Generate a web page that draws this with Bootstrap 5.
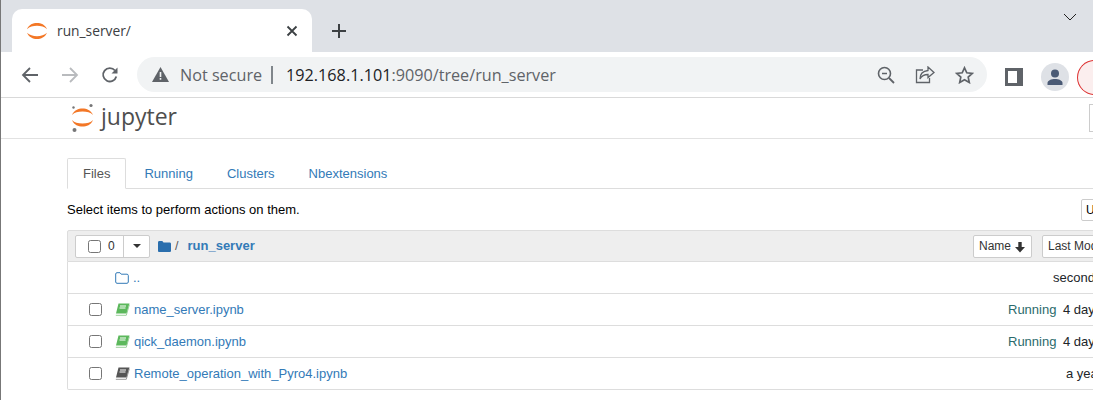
<!DOCTYPE html>
<html lang="en">
<head>
    <meta charset="UTF-8">
    <meta name="viewport" content="width=device-width, initial-scale=1.0">
    <title>run_server/</title>
    <link href="https://cdn.jsdelivr.net/npm/bootstrap@5.3.3/dist/css/bootstrap.min.css" rel="stylesheet">
    <script src="https://cdn.jsdelivr.net/npm/bootstrap@5.3.3/dist/js/bootstrap.bundle.min.js"></script>
    <style>
        html, body { height: 400px; overflow: hidden; }
        body {
            width: 1093px;
            background: #fff;
            font: 13px/18px "Liberation Sans", Arial, sans-serif;
            color: #000;
            border-left: 1px solid #777;
        }
        .tabstrip { height: 52px; background: #dee1e6; padding: 9px 0 0 11px; }
        .tab-active {
            width: 300px; height: 43px; background: #fff;
            border-radius: 10px 10px 0 0; padding: 0 14px 0 14px;
            font: 14px "Open Sans", sans-serif; color: #3c4043;
        }
        .tab-title { margin-left: 9px; font-size: 13.8px; }
        .tab-plus { margin-left: 19px; }
        .window-chevron { margin: 4px 16px 0 auto; align-self: flex-start; }
        .toolbar { height: 46px; border-bottom: 1px solid #d9d9d9; padding-top: 5px; }
        .nav-glyphs { width: 136px; flex: none; padding-left: 20px; gap: 22px; height: 35px; }
        .omnibox {
            width: 850px; flex: none; height: 35px; background: #f1f3f4; border-radius: 18px;
            padding: 0 13px 0 15px; font: 16.2px "Open Sans", sans-serif; color: #202124; white-space: nowrap;
        }
        .not-secure { color: #5f6368; margin-left: 11px; }
        .omni-sep { width: 2px; height: 18px; background: #80868b; margin: 0 13px 0 9px; }
        .url-dim { color: #5f6368; }
        .omni-icons { gap: 16px; margin-left: auto; }
        .tool-right { margin-left: 18px; gap: 18px; min-width: 0; }
        .avatar { width: 28px; height: 28px; border-radius: 50%; background: #dee1e6; flex: none; }
        .profile-chip {
            width: 40px; height: 35px; border: 1.5px solid #d33; border-right: 0;
            border-radius: 18px 0 0 18px; background: #fbeeee; margin-left: -10px; flex: none;
        }
        .jp-header { height: 41px; border-bottom: 1px solid #e2e2e2; padding-left: 70px; position: relative; }
        .jp-word { font: 23px "Open Sans", sans-serif; color: #4e4e4e; margin: 0 0 5px 6px; line-height: 30px; }
        .jp-corner { position: absolute; left: 1088px; top: 6px; width: 20px; height: 28px; border: 1px solid #ccc; }
        .jp-main { width: 1170px; margin-left: 66px; padding-top: 19px; }
        .jp-tabs.nav-tabs { border-color: #ddd; height: 31px; }
        .jp-tabs .nav-link {
            color: #337ab7; padding: 6px 15px; height: 31px; margin-right: 2px; line-height: 18px;
            font-size: 13px; border-radius: 2px 2px 0 0;
        }
        .jp-tabs .nav-link.active { color: #555; border-color: #ddd #ddd #fff; }
        .action-row { height: 41px; padding-top: 12px; position: relative; }
        .upload-edge {
            position: absolute; left: 1014px; top: 10px; width: 60px; height: 22px;
            border: 1px solid #ccc; border-radius: 2px; padding: 1px 0 0 4px; font-size: 12px; background: #fff;
        }
        .file-list { border-radius: 2px; border-color: #ddd; }
        .file-list .list-group-item { border-color: #ddd; padding: 0; height: 32px; display: flex; align-items: center; position: relative; font-size: 13px; }
        .file-list .list-head { background: #eee; height: 32px; }
        .sel-group { margin-left: 7px; height: 23px; border: 1px solid #ccc; border-radius: 2px; background: #fff; width: 75px; }
        .sel-main { width: 49px; padding-left: 12px; gap: 7px; font-size: 12px; color: #333; border-right: 1px solid #ccc; }
        .sel-caret { width: 25px; justify-content: center; }
        .caret-shape { width: 0; height: 0; border-left: 4px solid transparent; border-right: 4px solid transparent; border-top: 4px solid #333; }
        .jp-check {
            width: 13px; height: 13px; border: 1px solid #767676; border-radius: 2.5px; background: #fff; flex: none;
        }
        .crumb { margin-left: 8px; gap: 4px; color: #337ab7; }
        .crumb-name { font-weight: 700; margin-left: 5px; font-size: 13px; }
        .crumb-slash { color: #555; font-size: 12.5px; }
        .sort-btn {
            position: absolute; top: 4px; height: 23px; background: #fff; border: 1px solid #ccc; border-radius: 2px;
            font-size: 12px; color: #333; padding: 2px 5px; white-space: nowrap; line-height: 17px;
        }
        .sort-name { left: 905px; width: 59px; }
        .sort-date { left: 974px; width: 130px; }
        .row-check { margin-left: 21px; }
        .item-icon { margin-left: 13px; flex: none; width: 15px; }
        .up-icon { margin-left: 47px; }
        .item-link { color: #337ab7; text-decoration: none; margin-left: 4px; }
        .item-status { position: absolute; left: 940px; color: #2b6a6c; }
        .item-time { position: absolute; white-space: nowrap; }
    </style>
</head>
<body>
    <div class="tabstrip d-flex">
        <div class="tab-active d-flex align-items-center">
            <svg width="22" height="18" viewBox="0 0 22 18"><path d="M1 7.2C3 2.6 7 1 11 1s8 1.6 10 6.2C18.500 4.800 15 3.800 11 3.800S3.500 4.800 1 7.200z" fill="#f37726"/><path d="M1 10.800C3 15.400 7 17 11 17s8-1.600 10-6.200C18.500 13.200 15 14.200 11 14.200S3.500 13.200 1 10.800z" fill="#f37726"/></svg>
            <span class="tab-title">run_server/</span>
            <svg class="ms-auto" width="12" height="12" viewBox="0 0 12 12"><path d="M1.500 1.500l9 9M10.500 1.500l-9 9" stroke="#3c4043" stroke-width="1.800"/></svg>
        </div>
        <svg class="tab-plus align-self-center" width="16" height="16" viewBox="0 0 16 16"><path d="M8 1v14M1 8h14" stroke="#3c4043" stroke-width="2"/></svg>
        <svg class="window-chevron" width="14" height="8" viewBox="0 0 14 8"><path d="M1 1l6 6 6-6" fill="none" stroke="#222" stroke-width="1"/></svg>
    </div>
    <div class="toolbar d-flex">
        <div class="nav-glyphs d-flex align-items-center">
            <svg width="18" height="18" viewBox="0 0 18 18"><path d="M17 9H2M9 2L2 9l7 7" fill="none" stroke="#5f6368" stroke-width="1.800"/></svg>
            <svg width="18" height="18" viewBox="0 0 18 18"><path d="M1 9h15M9 2l7 7-7 7" fill="none" stroke="#b9bbbe" stroke-width="1.800"/></svg>
            <svg width="18" height="18" viewBox="0 0 18 18"><path d="M15.300 10.500A6.700 6.700 0 1 1 14 4.500" fill="none" stroke="#5f6368" stroke-width="1.800"/><path d="M16.500 1.500V7.500H10.500z" fill="#5f6368"/></svg>
        </div>
        <div class="omnibox d-flex align-items-center">
            <svg width="17" height="15" viewBox="0 0 17 15"><path d="M8.500 0L17 15H0z" fill="#5f6368"/><path d="M7.700 5h1.600v5H7.700zM7.700 11h1.600v1.700H7.700z" fill="#f1f3f4"/></svg>
            <span class="not-secure">Not secure</span>
            <span class="omni-sep"></span>
            <span>192.168.1.101<span class="url-dim">:9090/tree/run_server</span></span>
            <div class="omni-icons d-flex align-items-center">
                <svg width="18" height="18" viewBox="0 0 18 18"><circle cx="7.500" cy="7.500" r="6" fill="none" stroke="#5f6368" stroke-width="1.600"/><path d="M5 7.500h5" stroke="#5f6368" stroke-width="1.500"/><path d="M12 12l5 5" stroke="#5f6368" stroke-width="1.800"/></svg>
                <svg class="mx-1" width="20" height="18" viewBox="0 0 20 18"><path d="M8 4H1.500v12.500h13V12" fill="none" stroke="#5f6368" stroke-width="1.300"/><path d="M13 1l6 5.500-6 5V8.500C9 8.500 6.500 10 5 13c0-5 3-8 8-8.500z" fill="none" stroke="#5f6368" stroke-width="1.300"/></svg>
                <svg width="19" height="18" viewBox="0 0 19 18"><path d="M9.500 1.800l2.300 5 5.400.6-4 3.700 1.100 5.400-4.800-2.700-4.800 2.700 1.100-5.400-4-3.700 5.400-.6z" fill="none" stroke="#5f6368" stroke-width="1.700"/></svg>
            </div>
        </div>
        <div class="tool-right d-flex align-items-center flex-grow-1">
            <svg class="flex-shrink-0" width="18" height="18" viewBox="0 0 18 18"><rect width="18" height="18" fill="#5f6368"/><rect x="3" y="3" width="9" height="12" fill="#fff"/></svg>
            <div class="avatar d-flex align-items-center justify-content-center">
                <svg width="18" height="16" viewBox="0 0 18 16"><circle cx="9" cy="4.500" r="4" fill="#4a5a75"/><path d="M1.500 16v-2c0-2.500 4-4 7.500-4s7.500 1.500 7.500 4v2z" fill="#4a5a75"/></svg>
            </div>
            <div class="profile-chip"></div>
        </div>
    </div>
    <div class="jp-header d-flex align-items-center">
        <svg width="24" height="30" viewBox="0 0 24 30"><circle cx="20" cy="2.500" r="1.600" fill="#767677"/><circle cx="2.500" cy="4.500" r="1.200" fill="#767677"/><circle cx="3.500" cy="27" r="2" fill="#767677"/><path d="M1 12C3 7 7.500 5.500 11.500 5.500S20 7 22 12C19.500 9.400 16 8.500 11.500 8.500S3.500 9.400 1 12z" fill="#f37726"/><path d="M1 17C3 22 7.500 23.500 11.500 23.500S20 22 22 17C19.500 19.600 16 20.500 11.500 20.500S3.500 19.600 1 17z" fill="#f37726"/></svg>
        <span class="jp-word">jupyter</span>
        <span class="jp-corner"></span>
    </div>
    <div class="jp-main">
        <ul class="nav nav-tabs jp-tabs">
            <li class="nav-item"><a class="nav-link active" href="#">Files</a></li>
            <li class="nav-item"><a class="nav-link" href="#">Running</a></li>
            <li class="nav-item"><a class="nav-link" href="#">Clusters</a></li>
            <li class="nav-item"><a class="nav-link" href="#">Nbextensions</a></li>
        </ul>
        <div class="action-row">
            Select items to perform actions on them.
            <span class="upload-edge">Upload</span>
        </div>
        <div class="list-group file-list">
            <div class="list-group-item list-head">
                <div class="sel-group d-flex">
                    <div class="sel-main d-flex align-items-center"><span class="jp-check"></span>0</div>
                    <div class="sel-caret d-flex align-items-center"><span class="caret-shape"></span></div>
                </div>
                <div class="crumb d-flex align-items-center">
                    <svg width="13" height="11" viewBox="0 0 13 11"><path d="M0 1.500C0 .700.500 0 1.300 0h3l1.200 1.500h6.200c.700 0 1.300.600 1.300 1.300v6.900c0 .700-.600 1.300-1.300 1.300H1.300C.500 11 0 10.400 0 9.700z" fill="#2a6ead"/></svg>
                    <span class="crumb-slash">/</span>
                    <span class="crumb-name">run_server</span>
                </div>
                <span class="sort-btn sort-name">Name <svg width="12" height="12" viewBox="0 0 12 12"><path d="M4.300 1h3.400v5H11L6 11.500 1 6h3.300z" fill="#333"/></svg></span>
                <span class="sort-btn sort-date">Last Modified</span>
            </div>
            <div class="list-group-item">
                <svg class="up-icon" width="14" height="12" viewBox="0 0 14 12"><path d="M.700 2C.700 1.200 1.200.700 2 .700h3l1.200 1.500H12c.700 0 1.300.500 1.300 1.300V10c0 .700-.600 1.300-1.300 1.300H2c-.800 0-1.300-.600-1.300-1.300z" fill="none" stroke="#337ab7"/></svg>
                <a class="item-link ms-1" href="#">..</a>
                <span class="item-time" style="left: 985px">seconds ago</span>
            </div>
            <div class="list-group-item">
                <span class="jp-check row-check"></span>
                <svg class="item-icon" width="15" height="13" viewBox="0 0 15 13"><path d="M3.500.500h11l-2.800 10H1z" fill="#5cb85c"/><path d="M.800 12.300h10.500l3-10.500" fill="none" stroke="#9bd09b"/><path d="M5 3h6M4.500 5h6" stroke="#fff"/></svg>
                <a class="item-link" href="#">name_server.ipynb</a>
                <span class="item-status">Running</span>
                <span class="item-time" style="left: 995px">4 days ago</span>
            </div>
            <div class="list-group-item">
                <span class="jp-check row-check"></span>
                <svg class="item-icon" width="15" height="13" viewBox="0 0 15 13"><path d="M3.500.500h11l-2.800 10H1z" fill="#5cb85c"/><path d="M.800 12.300h10.500l3-10.500" fill="none" stroke="#9bd09b"/><path d="M5 3h6M4.500 5h6" stroke="#fff"/></svg>
                <a class="item-link" href="#">qick_daemon.ipynb</a>
                <span class="item-status">Running</span>
                <span class="item-time" style="left: 995px">4 days ago</span>
            </div>
            <div class="list-group-item">
                <span class="jp-check row-check"></span>
                <svg class="item-icon" width="15" height="13" viewBox="0 0 15 13"><path d="M3.500.500h11l-2.800 10H1z" fill="#555"/><path d="M.800 12.300h10.500l3-10.500" fill="none" stroke="#999"/><path d="M5 3h6M4.500 5h6" stroke="#fff"/></svg>
                <a class="item-link" href="#">Remote_operation_with_Pyro4.ipynb</a>
                <span class="item-time" style="left: 998px">a year ago</span>
            </div>
        </div>
    </div>
</body>
</html>
